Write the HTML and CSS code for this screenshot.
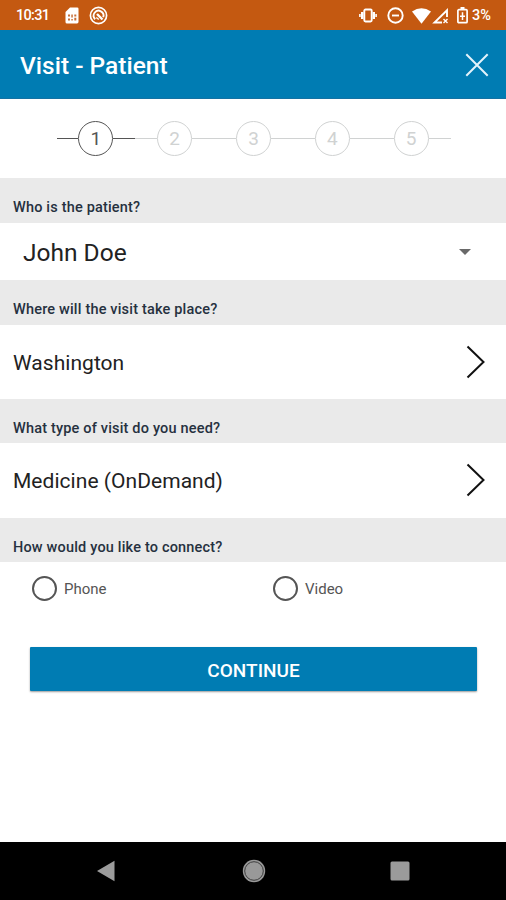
FILE: index.html
```html
<!DOCTYPE html>
<html lang="en">
<head>
<meta charset="utf-8">
<title>Visit - Patient</title>
<link rel="stylesheet" href="styles.css">
</head>
<body>
<div class="screen">
  <div class="status">
    <span class="clock">10:31</span>
    <svg class="sim" width="14" height="17" viewBox="0 0 14 17"><path d="M5 .5h7.200q1.300 0 1.300 1.300v13q0 1.700-1.500 1.700H2Q.5 16.500.5 15V5z" fill="#fff"/><path d="M3 7.500h2v2H3zM6.300 7.500h1.500v3H6.300zM9.300 7.500h2v2h-2zM3 11.500h2v2H3zM6.300 12h1.500v1.500H6.300zM9.300 10.800h2v2.700h-2z" fill="#c8703a"/></svg>
    <svg class="badge" width="19" height="19" viewBox="0 0 19 19" fill="none" stroke="#fff"><circle cx="9.500" cy="9.500" r="8.100" stroke-width="1.700"/><path d="M6.200 13.200A4.900 4.900 0 1 1 14.200 11.300" stroke-width="1.900"/><path d="M8 8l5.500 5.500" stroke-width="2.400"/><path d="M7.300 11.500l2.500 2" stroke-width="1.500"/></svg>
    <span class="spacer"></span>
    <svg class="vibrate" width="18" height="15" viewBox="0 0 18 15" fill="none" stroke="#fff"><rect x="5.300" y="1.500" width="7.400" height="12" rx="1.200" stroke-width="1.900"/><path d="M3.200 4v7M14.800 4v7" stroke-width="2.400"/><path d="M.9 6v3M17.100 6v3" stroke-width="1.600"/></svg>
    <svg class="dnd" width="17" height="17" viewBox="0 0 17 17" fill="none" stroke="#fff" stroke-width="1.900"><circle cx="8.500" cy="8.500" r="7.200"/><path d="M5 8.500h7"/></svg>
    <svg class="wifi" width="19" height="16" viewBox="0 0 19 16"><path d="M0 3.500Q9.500-3 19 3.500L9.500 15.700z" fill="#fff"/></svg>
    <svg class="signal" width="17" height="16" viewBox="0 0 17 16"><path d="M15 9V2.300L2.500 14.500H10" fill="none" stroke="#fff" stroke-width="1.900"/><path d="M11.500 11l4 4M15.500 11l-4 4" stroke="#fff" stroke-width="1.400" fill="none"/></svg>
    <svg class="battery" width="11" height="17" viewBox="0 0 11 17" fill="none" stroke="#fff"><path d="M3.500 1h4" stroke-width="2"/><rect x=".9" y="2.700" width="9.200" height="13" rx="1" stroke-width="1.700"/><path d="M5.500 5.300v7.800M3 9.200h5" stroke-width="1.500"/></svg>
    <span class="percent">3%</span>
  </div>
  <header class="appbar">
    <h1>Visit - Patient</h1>
    <svg class="close" width="24" height="24" viewBox="0 0 24 24"><path d="M1.300 1.300l21.400 21.400M22.700 1.300L1.300 22.700" stroke="#e3f3fb" stroke-width="2"/></svg>
  </header>
  <div class="stepper">
    <div class="step active"><span>1</span></div>
    <div class="step"><span>2</span></div>
    <div class="step"><span>3</span></div>
    <div class="step"><span>4</span></div>
    <div class="step"><span>5</span></div>
  </div>
  <div class="label">Who is the patient?</div>
  <div class="row select"><span>John Doe</span>
    <svg width="12" height="6" viewBox="0 0 12 6"><path d="M0 0h12L6 6z" fill="#696969"/></svg>
  </div>
  <div class="label">Where will the visit take place?</div>
  <div class="row link"><span>Washington</span>
    <svg width="20" height="34" viewBox="0 0 20 34"><path d="M1.500 1.500L17.500 17 1.500 32.500" fill="none" stroke="#111" stroke-width="2"/></svg>
  </div>
  <div class="label">What type of visit do you need?</div>
  <div class="row link"><span>Medicine (OnDemand)</span>
    <svg width="20" height="34" viewBox="0 0 20 34"><path d="M1.500 1.500L17.500 17 1.500 32.500" fill="none" stroke="#111" stroke-width="2"/></svg>
  </div>
  <div class="label">How would you like to connect?</div>
  <div class="options">
    <div class="option"><i class="radio"></i>Phone</div>
    <div class="option"><i class="radio"></i>Video</div>
  </div>
  <button class="continue">CONTINUE</button>
  <nav class="navbar">
    <svg width="18" height="22" viewBox="0 0 18 22"><path d="M17.500.7v20.600L0 11z" fill="#9b9b9b"/></svg>
    <svg width="24" height="24" viewBox="0 0 24 24"><circle cx="12" cy="12" r="11.200" fill="#999"/><circle cx="12" cy="12" r="9.300" fill="none" stroke="#333" stroke-width=".9"/></svg>
    <svg width="20" height="20" viewBox="0 0 20 20"><rect x=".5" y=".5" width="19" height="19" rx="1.500" fill="#9b9b9b"/></svg>
  </nav>
</div>
</body>
</html>
```
FILE: styles.css
```css
* { box-sizing: border-box; }
body { margin: 0; background: #fff; font-family: Roboto, "Liberation Sans", sans-serif; }
svg { display: block; flex: none; }
.screen { width: 506px; height: 900px; display: flex; flex-direction: column; overflow: hidden; }
.status { height: 30px; flex: none; display: flex; align-items: center; padding: 1px 14px 0 16px; background: #c45911; color: #fff; font-size: 14.5px; font-weight: 500; white-space: nowrap; }
.clock { width: 49px; letter-spacing: -.7px; }
.badge { margin-left: 10px; }
.spacer { flex: 1; }
.dnd { margin-left: 10px; }
.wifi { margin-left: 8px; }
.signal { margin-left: 1px; }
.battery { margin: 0 4px 0 8px; }
.percent { width: 20px; font-size: 14.5px; }
.appbar { height: 69px; flex: none; display: flex; align-items: center; justify-content: space-between; padding: 0 17px 0 20px; background: #007cb3; border-bottom: 1px solid #1472a3; color: #fff; }
h1 { margin: 0; padding-top: 3px; font-size: 24.5px; font-weight: 500; line-height: 30px; }
.close { margin-top: 1px; }
.stepper { height: 79px; flex: none; display: flex; padding: 0 55.5px 0 56.5px; }
.step { flex: 1; display: flex; align-items: center; color: #d0d2d2; font-size: 19px; }
.step::before, .step::after { content: ""; flex: 1; height: 1.5px; background: currentColor; }
.step span { width: 35px; height: 35px; border: 1.5px solid; border-radius: 50%; display: flex; align-items: center; justify-content: center; }
.step.active { color: #555; }
.label { height: 44.5px; flex: none; display: flex; align-items: flex-end; padding: 0 13px 5.500px; background: #eaeaea; color: #26313f; font-size: 14.5px; letter-spacing: .18px; line-height: 18px; font-weight: 500; }
.row { flex: none; display: flex; align-items: center; justify-content: space-between; color: #222; }
.select { height: 57.5px; padding: 2px 35px 0 23px; font-size: 24.5px; }
.link { height: 74.300px; padding: 0 20px 0 13px; font-size: 21px; }
.link span { padding-top: 2px; letter-spacing: .04px; }
.options { height: 53px; flex: none; display: grid; grid-template-columns: 241px 1fr; padding-left: 32px; }
.option { display: flex; align-items: center; gap: 7px; color: #555; font-size: 15px; }
.radio { width: 25px; height: 25px; border: 2px solid #555; border-radius: 50%; }
.continue { width: 447px; height: 44px; flex: none; margin: 32px 0 0 30px; padding: 2px 0 0; border: 0; border-radius: 1px; background: #007cb3; box-shadow: 0 1px 2px #0006; color: #fff; font: 500 19px Roboto, sans-serif; }
.navbar { height: 58px; flex: none; margin-top: auto; display: flex; align-items: center; justify-content: space-between; padding: 0 96px 0 97px; background: #000; }
.navbar svg:nth-child(2) { margin-left: 2px; }
```
